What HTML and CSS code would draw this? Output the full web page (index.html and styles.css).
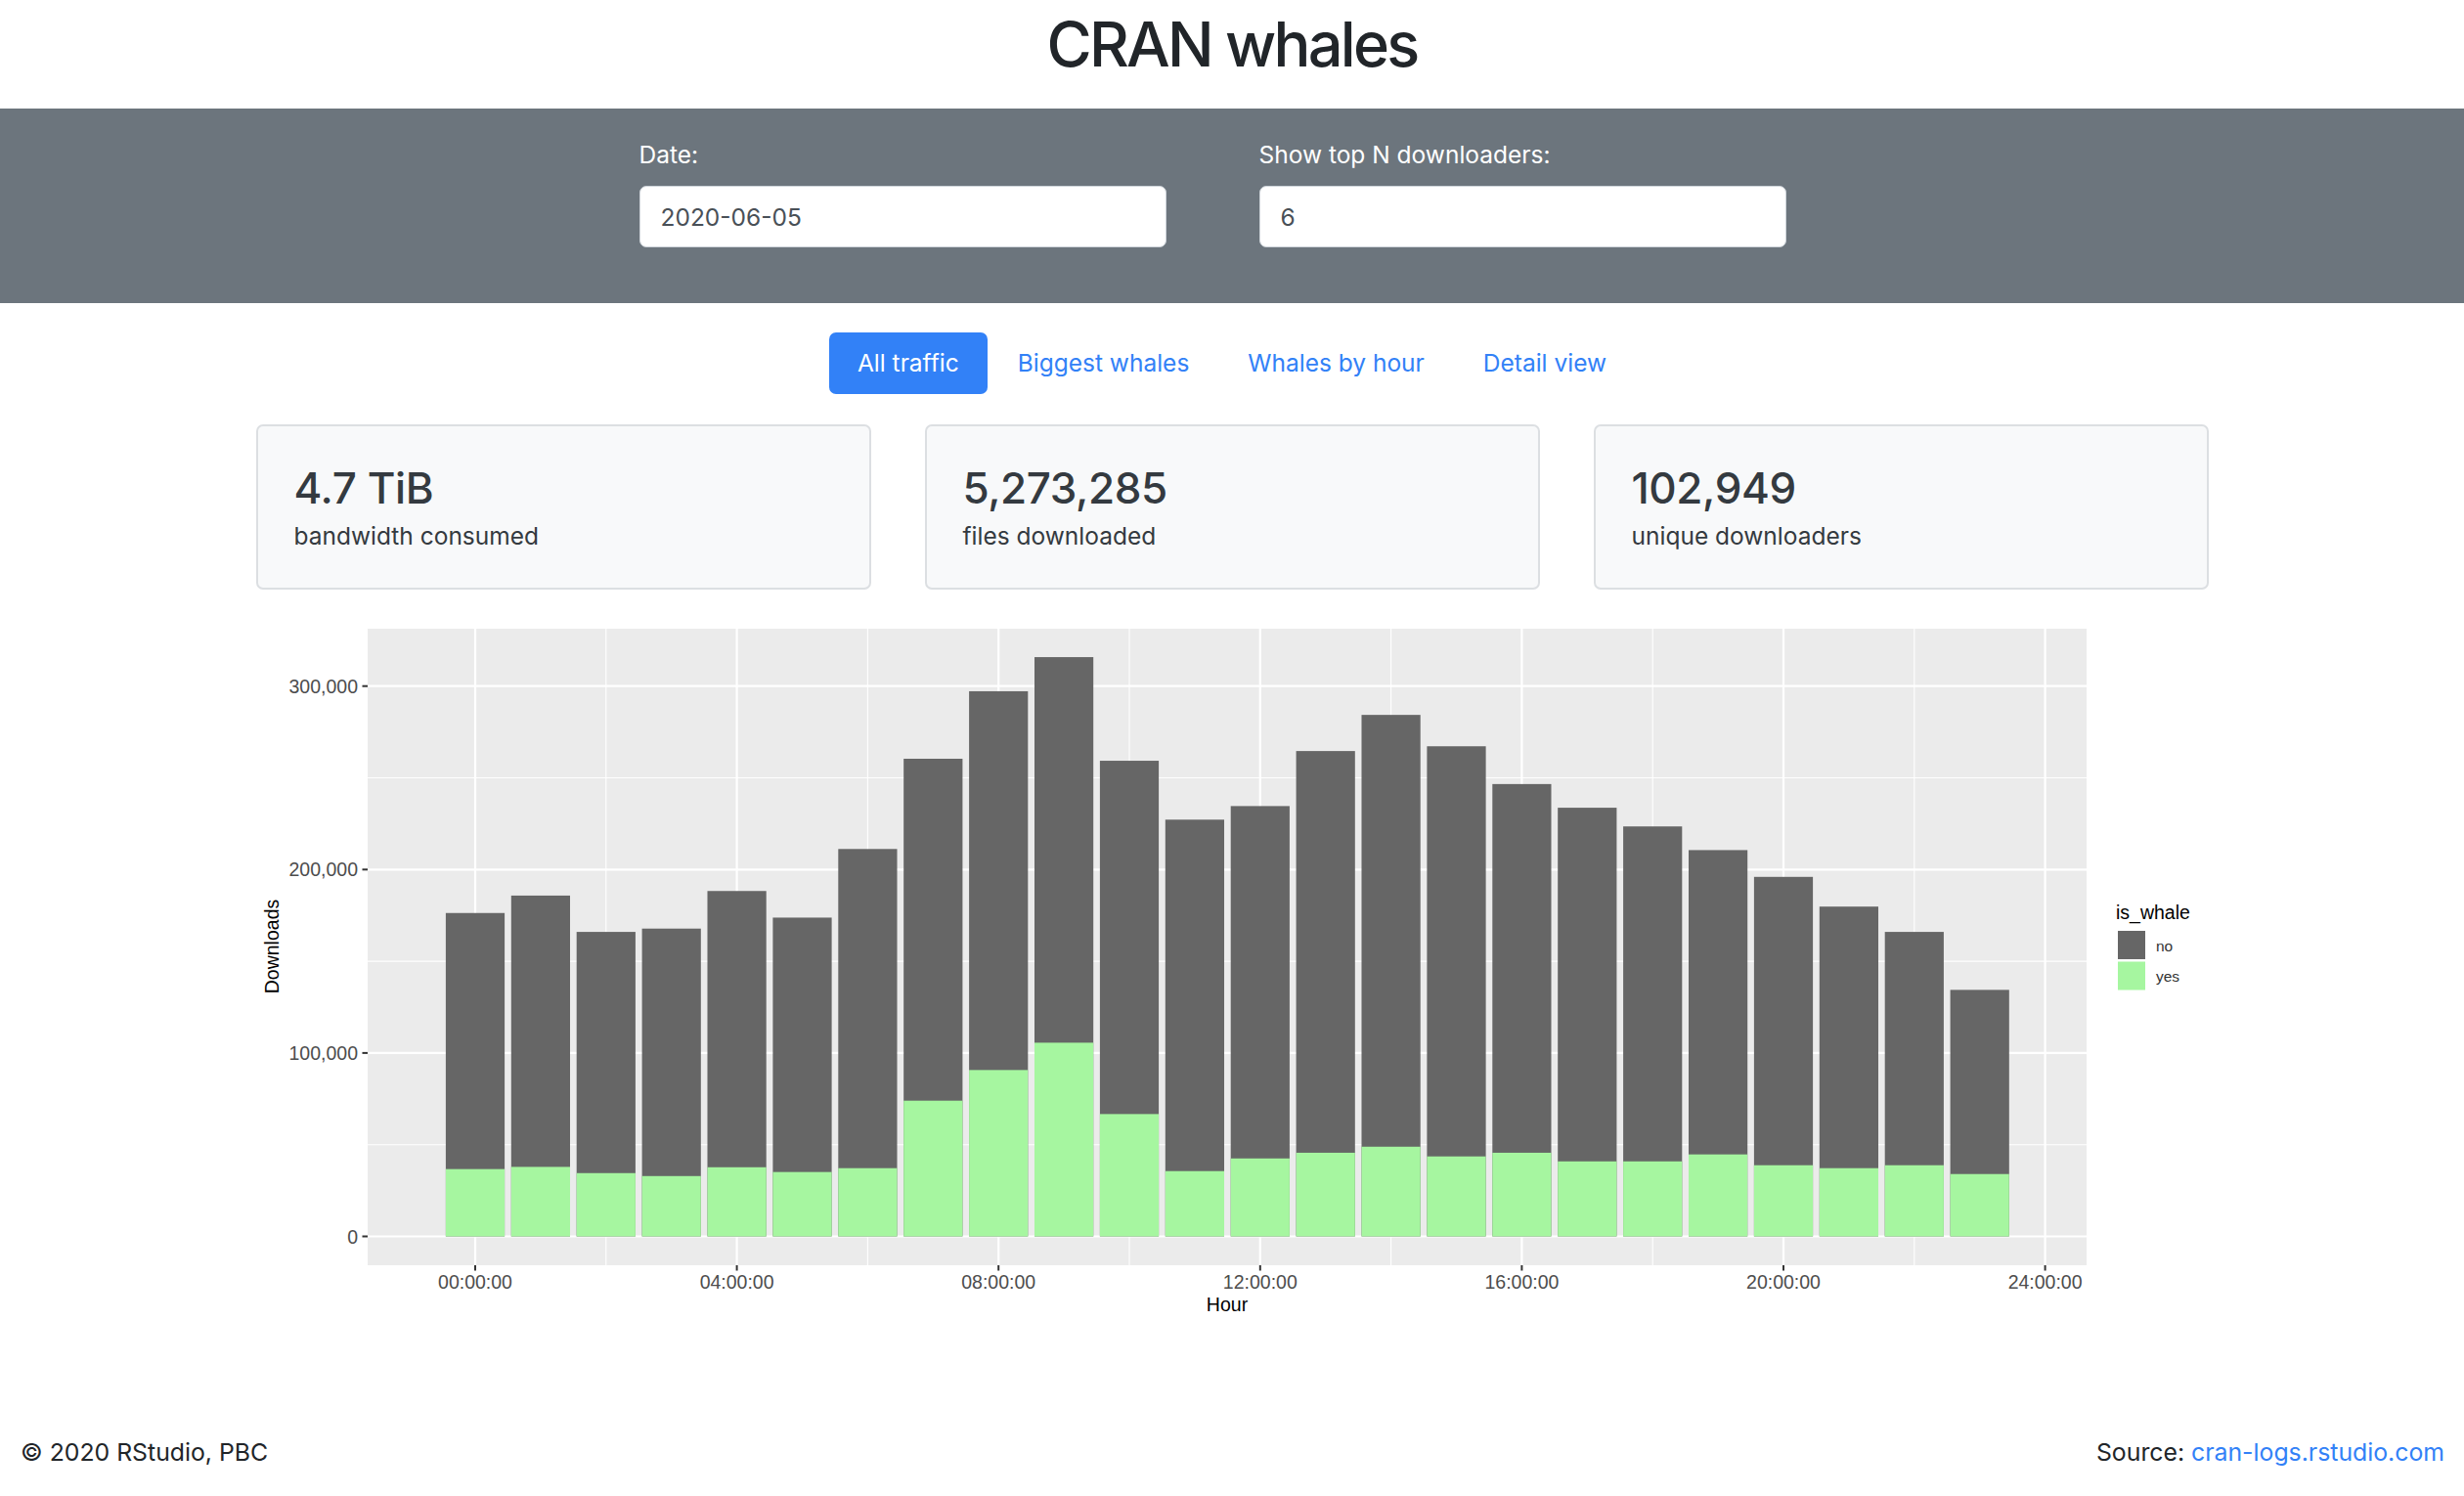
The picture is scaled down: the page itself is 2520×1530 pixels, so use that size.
FILE: index.html
```html
<!DOCTYPE html>
<html lang="en">
<head>
<meta charset="utf-8">
<title>CRAN whales</title>
<link rel="stylesheet" href="styles.css">
</head>
<body>
<header class="page-header">
  <h1 class="title">CRAN whales</h1>
</header>

<section class="controls">
  <div class="controls-row">
    <div class="field">
      <label class="field-label" for="date">Date:</label>
      <input class="field-input" id="date" type="text" value="2020-06-05" readonly>
    </div>
    <div class="field">
      <label class="field-label" for="topn">Show top N downloaders:</label>
      <input class="field-input" id="topn" type="text" value="6" readonly>
    </div>
  </div>
</section>

<nav class="tabs">
  <a class="tab active" href="#">All traffic</a>
  <a class="tab" href="#">Biggest whales</a>
  <a class="tab" href="#">Whales by hour</a>
  <a class="tab" href="#">Detail view</a>
</nav>

<section class="cards">
  <div class="card">
    <div class="card-value">4.7 TiB</div>
    <div class="card-label">bandwidth consumed</div>
  </div>
  <div class="card">
    <div class="card-value">5,273,285</div>
    <div class="card-label">files downloaded</div>
  </div>
  <div class="card">
    <div class="card-value">102,949</div>
    <div class="card-label">unique downloaders</div>
  </div>
</section>

<div class="chart-wrap">
<svg class="chart" viewBox="262 620 1997 730" width="1997" height="730" xmlns="http://www.w3.org/2000/svg">
  <rect class="panel" x="376" y="643" width="1758" height="651"/>
  <g class="grid-minor">
    <line x1="376" x2="2134" y1="1170.7" y2="1170.7"/>
    <line x1="376" x2="2134" y1="983.1" y2="983.1"/>
    <line x1="376" x2="2134" y1="795.5" y2="795.5"/>
    <line x1="619.8" x2="619.8" y1="643" y2="1294"/>
    <line x1="887.4" x2="887.4" y1="643" y2="1294"/>
    <line x1="1155" x2="1155" y1="643" y2="1294"/>
    <line x1="1422.6" x2="1422.6" y1="643" y2="1294"/>
    <line x1="1690.2" x2="1690.2" y1="643" y2="1294"/>
    <line x1="1957.8" x2="1957.8" y1="643" y2="1294"/>
  </g>
  <g class="grid-major">
    <line x1="376" x2="2134" y1="1264.5" y2="1264.5"/>
    <line x1="376" x2="2134" y1="1076.9" y2="1076.9"/>
    <line x1="376" x2="2134" y1="889.3" y2="889.3"/>
    <line x1="376" x2="2134" y1="701.7" y2="701.7"/>
    <line x1="486" x2="486" y1="643" y2="1294"/>
    <line x1="753.6" x2="753.6" y1="643" y2="1294"/>
    <line x1="1021.2" x2="1021.2" y1="643" y2="1294"/>
    <line x1="1288.8" x2="1288.8" y1="643" y2="1294"/>
    <line x1="1556.4" x2="1556.4" y1="643" y2="1294"/>
    <line x1="1824" x2="1824" y1="643" y2="1294"/>
    <line x1="2091.6" x2="2091.6" y1="643" y2="1294"/>
  </g>
  <g transform="translate(486 1264.5) scale(66.9 -1.876)">
    <g class="bar-no">
      <rect x="-0.45" y="0" width="0.9" height="176.3"/>
      <rect x="0.55" y="0" width="0.9" height="185.8"/>
      <rect x="1.55" y="0" width="0.9" height="166.0"/>
      <rect x="2.55" y="0" width="0.9" height="167.8"/>
      <rect x="3.55" y="0" width="0.9" height="188.3"/>
      <rect x="4.55" y="0" width="0.9" height="173.8"/>
      <rect x="5.55" y="0" width="0.9" height="211.2"/>
      <rect x="6.55" y="0" width="0.9" height="260.4"/>
      <rect x="7.55" y="0" width="0.9" height="297.2"/>
      <rect x="8.55" y="0" width="0.9" height="315.8"/>
      <rect x="9.55" y="0" width="0.9" height="259.3"/>
      <rect x="10.55" y="0" width="0.9" height="227.2"/>
      <rect x="11.55" y="0" width="0.9" height="234.6"/>
      <rect x="12.55" y="0" width="0.9" height="264.6"/>
      <rect x="13.55" y="0" width="0.9" height="284.3"/>
      <rect x="14.55" y="0" width="0.9" height="267.2"/>
      <rect x="15.55" y="0" width="0.9" height="246.6"/>
      <rect x="16.55" y="0" width="0.9" height="233.7"/>
      <rect x="17.55" y="0" width="0.9" height="223.5"/>
      <rect x="18.55" y="0" width="0.9" height="210.6"/>
      <rect x="19.55" y="0" width="0.9" height="196.0"/>
      <rect x="20.55" y="0" width="0.9" height="179.8"/>
      <rect x="21.55" y="0" width="0.9" height="166.0"/>
      <rect x="22.55" y="0" width="0.9" height="134.4"/>
    </g>
    <g class="bar-yes">
      <rect x="-0.45" y="0" width="0.9" height="36.7"/>
      <rect x="0.55" y="0" width="0.9" height="37.9"/>
      <rect x="1.55" y="0" width="0.9" height="34.5"/>
      <rect x="2.55" y="0" width="0.9" height="32.9"/>
      <rect x="3.55" y="0" width="0.9" height="37.7"/>
      <rect x="4.55" y="0" width="0.9" height="35.1"/>
      <rect x="5.55" y="0" width="0.9" height="37.2"/>
      <rect x="6.55" y="0" width="0.9" height="74.0"/>
      <rect x="7.55" y="0" width="0.9" height="90.7"/>
      <rect x="8.55" y="0" width="0.9" height="105.6"/>
      <rect x="9.55" y="0" width="0.9" height="66.7"/>
      <rect x="10.55" y="0" width="0.9" height="35.6"/>
      <rect x="11.55" y="0" width="0.9" height="42.5"/>
      <rect x="12.55" y="0" width="0.9" height="45.6"/>
      <rect x="13.55" y="0" width="0.9" height="48.9"/>
      <rect x="14.55" y="0" width="0.9" height="43.6"/>
      <rect x="15.55" y="0" width="0.9" height="45.6"/>
      <rect x="16.55" y="0" width="0.9" height="40.9"/>
      <rect x="17.55" y="0" width="0.9" height="40.9"/>
      <rect x="18.55" y="0" width="0.9" height="44.7"/>
      <rect x="19.55" y="0" width="0.9" height="38.8"/>
      <rect x="20.55" y="0" width="0.9" height="37.2"/>
      <rect x="21.55" y="0" width="0.9" height="38.8"/>
      <rect x="22.55" y="0" width="0.9" height="34.0"/>
    </g>
  </g>
  <g class="ticks">
    <line x1="370.5" x2="376" y1="1264.5" y2="1264.5"/>
    <line x1="370.5" x2="376" y1="1076.9" y2="1076.9"/>
    <line x1="370.5" x2="376" y1="889.3" y2="889.3"/>
    <line x1="370.5" x2="376" y1="701.7" y2="701.7"/>
    <line x1="486" x2="486" y1="1294" y2="1299.5"/>
    <line x1="753.6" x2="753.6" y1="1294" y2="1299.5"/>
    <line x1="1021.2" x2="1021.2" y1="1294" y2="1299.5"/>
    <line x1="1288.8" x2="1288.8" y1="1294" y2="1299.5"/>
    <line x1="1556.4" x2="1556.4" y1="1294" y2="1299.5"/>
    <line x1="1824" x2="1824" y1="1294" y2="1299.5"/>
    <line x1="2091.6" x2="2091.6" y1="1294" y2="1299.5"/>
  </g>
  <g class="tick-label y-labels">
    <text x="366" y="708.7">300,000</text>
    <text x="366" y="896.3">200,000</text>
    <text x="366" y="1083.9">100,000</text>
    <text x="366" y="1271.5">0</text>
  </g>
  <g class="tick-label x-labels">
    <text x="486" y="1318">00:00:00</text>
    <text x="753.6" y="1318">04:00:00</text>
    <text x="1021.2" y="1318">08:00:00</text>
    <text x="1288.8" y="1318">12:00:00</text>
    <text x="1556.4" y="1318">16:00:00</text>
    <text x="1824" y="1318">20:00:00</text>
    <text x="2091.6" y="1318">24:00:00</text>
  </g>
  <text class="axis-title" x="1255" y="1340.5">Hour</text>
  <text class="axis-title" x="285" y="968" transform="rotate(-90 285 968)">Downloads</text>
  <g class="legend">
    <text class="legend-title" x="2164" y="940">is_whale</text>
    <rect class="key-no" x="2166" y="952" width="28" height="29"/>
    <rect class="key-yes" x="2166" y="983.5" width="28" height="29"/>
    <text class="legend-label" x="2205" y="972.5">no</text>
    <text class="legend-label" x="2205" y="1003.5">yes</text>
  </g>
</svg>
</div>

<footer class="footer">
  <span class="copyright">© 2020 RStudio, PBC</span>
  <span class="source">Source: <a class="source-link" href="#">cran-logs.rstudio.com</a></span>
</footer>
</body>
</html>
```

FILE: styles.css
```css
* { box-sizing: border-box; }

body {
  margin: 0;
  background: #ffffff;
  color: #212529;
  font-family: Inter, "Noto Sans", "Liberation Sans", sans-serif;
  font-size: 24.5px;
}

.page-header {
  height: 111px;
  padding-top: 7px;
  text-align: center;
}

.title {
  margin: 0;
  font-size: 63px;
  font-weight: 500;
  line-height: 76px;
  color: #212529;
  letter-spacing: -2.7px;
}

.controls {
  background: #6c757d;
  height: 199px;
  padding-top: 30px;
}

.controls-row {
  width: 1997px;
  margin: 0 auto;
  padding-left: 392px;
  display: flex;
  gap: 95px;
}

.field {
  width: 539px;
  display: flex;
  flex-direction: column;
}

.field-label {
  color: #ffffff;
  font-size: 24.5px;
  line-height: 35px;
  margin-bottom: 14px;
}

.field-input {
  width: 539px;
  height: 63px;
  border: 1.75px solid #ced4da;
  border-radius: 7px;
  background: #ffffff;
  padding: 0 21px;
  font-family: Inter, "Noto Sans", sans-serif;
  font-size: 24.5px;
  color: #495057;
  outline: none;
}

.tabs {
  margin-top: 30px;
  display: flex;
  justify-content: center;
  gap: 2px;
}

.tab {
  display: block;
  height: 63px;
  line-height: 63px;
  padding: 0 29px;
  border-radius: 7px;
  color: #3281f7;
  text-decoration: none;
  font-size: 24.5px;
}

.tab.active {
  background: #3281f7;
  color: #ffffff;
}

.cards {
  width: 1997px;
  margin: 31px auto 0;
  display: flex;
  gap: 55px;
}

.card {
  width: 629px;
  height: 169px;
  background: #f8f9fa;
  border: 2px solid #dcdfe2;
  border-radius: 7px;
  padding: 36.5px 37px 0;
}

.card-value {
  font-size: 44px;
  line-height: 53px;
  font-weight: 500;
  color: #343a40;
  letter-spacing: -0.4px;
}

.card-label {
  margin-top: 5px;
  font-size: 24.5px;
  line-height: 35px;
  color: #343a40;
}

.chart-wrap {
  width: 1997px;
  margin: 17px auto 0;
}

.chart {
  display: block;
}

.panel { fill: #ebebeb; }

.grid-minor line { stroke: #ffffff; stroke-width: 1.1; }
.grid-major line { stroke: #ffffff; stroke-width: 2.2; }

.bar-no rect { fill: #666666; }
.bar-yes rect { fill: #a6f6a0; }

.ticks line { stroke: #333333; stroke-width: 2; }

.tick-label text {
  font-family: "Liberation Sans", Arial, sans-serif;
  font-size: 19.5px;
  fill: #4d4d4d;
}

.y-labels text { text-anchor: end; }
.x-labels text { text-anchor: middle; }

.axis-title {
  font-family: "Liberation Sans", Arial, sans-serif;
  font-size: 19.5px;
  fill: #000000;
  text-anchor: middle;
}

.legend-title {
  font-family: "Liberation Sans", Arial, sans-serif;
  font-size: 19.5px;
  fill: #000000;
}

.legend-label {
  font-family: "Liberation Sans", Arial, sans-serif;
  font-size: 15.5px;
  fill: #333333;
}

.key-no { fill: #666666; }
.key-yes { fill: #a6f6a0; }

.footer {
  margin-top: 118px;
  display: flex;
  justify-content: space-between;
  padding: 0 20px 0 21px;
  font-size: 24.8px;
  line-height: 35px;
  color: #212529;
}

.source-link {
  color: #3281f7;
  text-decoration: none;
}
```
